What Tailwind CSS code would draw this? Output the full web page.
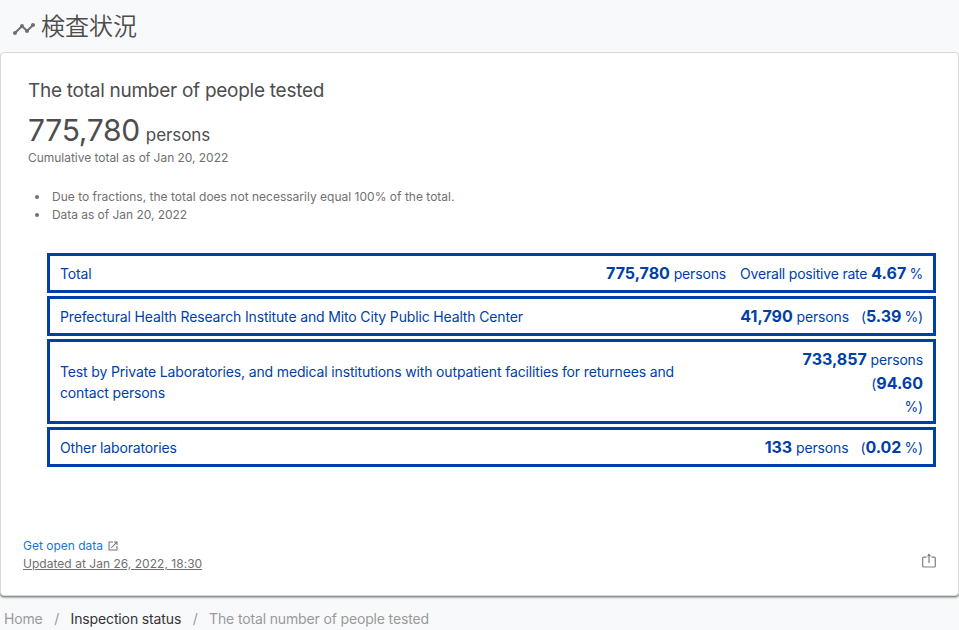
<!DOCTYPE html>
<html lang="en">
<head>
<meta charset="utf-8">
<title>検査状況</title>
<script src="https://cdn.jsdelivr.net/npm/@tailwindcss/browser@4"></script>
</head>
<body class="h-[630px] overflow-hidden bg-[#f8f9fa] font-['Inter','Noto_Sans_CJK_JP',sans-serif] text-[#4d4d4d]">
<header class="flex h-[52px] items-center pl-3">
  <svg class="mt-1.5 size-6 shrink-0" viewBox="0 0 24 24" fill="#707070"><path d="M23 8c0 1.1-.9 2-2 2-.18 0-.35-.02-.51-.07l-3.56 3.55c.05.16.07.34.07.52 0 1.1-.9 2-2 2s-2-.9-2-2c0-.18.02-.36.07-.52l-2.55-2.55c-.16.05-.34.07-.52.07s-.36-.02-.52-.07l-4.55 4.56c.05.16.07.33.07.51 0 1.1-.9 2-2 2s-2-.9-2-2 .9-2 2-2c.18 0 .35.02.51.07l4.56-4.55C8.02 9.36 8 9.18 8 9c0-1.1.9-2 2-2s2 .9 2 2c0 .18-.02.36-.07.52l2.55 2.55c.16-.05.34-.07.52-.07s.36.02.52.07l3.55-3.56C19.02 8.35 19 8.18 19 8c0-1.1.9-2 2-2s2 .9 2 2z"/></svg>
  <h2 lang="ja" class="mb-0.5 ml-[5px] font-['Noto_Sans_CJK_JP',sans-serif] text-2xl font-[350]">検査状況</h2>
</header>
<main class="flex h-[544px] flex-col rounded border border-[#d9d9d9] bg-white px-[22px] pt-[23px] pb-[22px] shadow-[0_2px_2px_rgba(0,0,0,0.28),0_1px_1px_rgba(0,0,0,0.25)]">
  <div class="px-[5px]">
    <h3 class="text-[19px] leading-[30px] tracking-[-0.27px]">The total number of people tested</h3>
    <p class="mt-1 flex h-[39px] items-baseline gap-[6px]"><span class="text-[30px] leading-[40px] tracking-[-0.3px]">775,780</span><span class="text-[17px] tracking-[-0.1px]">persons</span></p>
    <p class="text-xs leading-[18px] tracking-[-0.03px] text-[#707070]">Cumulative total as of Jan 20, 2022</p>
  </div>
  <ul class="mt-[21px] list-disc pl-[27px] text-xs leading-[18px] tracking-[0.01px] text-[#707070]">
    <li class="pl-0.5">Due to fractions, the total does not necessarily equal 100% of the total.</li>
    <li class="pl-0.5 tracking-[-0.04px]">Data as of Jan 20, 2022</li>
  </ul>
  <ul class="mt-[29px] ml-6 flex w-[889px] flex-col gap-[3px] text-sm leading-[21px] tracking-[-0.15px] text-[#003fa7]">
    <li class="flex h-10 items-center justify-between border-3 border-[#003fa7] px-[10px]"><span>Total</span><span><strong class="text-base tracking-normal">775,780</strong> <span>persons</span><span class="ml-[14px] tracking-[-0.2px]">Overall positive rate</span> <strong class="text-base tracking-[0.1px]">4.67</strong><span class="ml-[3px]">%</span></span></li>
    <li class="flex h-10 items-center justify-between border-3 border-[#003fa7] px-[10px]"><span>Prefectural Health Research Institute and Mito City Public Health Center</span><span><strong class="text-base tracking-normal">41,790</strong> persons<span class="ml-3">(</span><strong class="text-base tracking-normal">5.39</strong><span class="ml-[3px]">%)</span></span></li>
    <li class="flex h-[85px] items-center justify-between border-3 border-[#003fa7] px-[10px]"><span>Test by Private Laboratories, and medical institutions with outpatient facilities for returnees and<br>contact persons</span><span class="mt-1 text-right leading-[23.5px]"><strong class="text-base leading-none tracking-normal">733,857</strong> persons<br>(<strong class="text-base leading-none tracking-normal">94.60</strong><br>%)</span></li>
    <li class="flex h-10 items-center justify-between border-3 border-[#003fa7] px-[10px]"><span>Other laboratories</span><span><strong class="text-base tracking-normal">133</strong> persons<span class="ml-3">(</span><strong class="text-base tracking-normal">0.02</strong><span class="ml-[3px]">%)</span></span></li>
  </ul>
  <footer class="mt-auto flex items-end justify-between text-xs leading-[18px]">
    <div>
      <a class="flex items-center text-[#1976d2]"><span>Get open data</span><svg class="ml-1 size-3" viewBox="0 0 24 24" fill="#707070"><path d="M19 19H5V5h7V3H3v18h18v-9h-2v7zM14 3v2h3.6l-9.8 9.8 1.4 1.4L19 6.4V10h2V3h-7z"/></svg></a>
      <p class="tracking-[0.03px] text-[#707070] underline">Updated at Jan 26, 2022, 18:30</p>
    </div>
    <svg class="-mr-px mb-1 size-4" viewBox="0 0 16 16" fill="none" stroke="#808080" stroke-width="1.2"><path d="M5.5 4.2H2.7Q1.7 4.2 1.7 5.2V13Q1.7 14 2.7 14H13.3Q14.3 14 14.3 13V5.2Q14.3 4.2 13.3 4.2H10.5M8 10V1"/><path d="M5.8 3.2L8 .4L10.2 3.2Z" fill="#808080" stroke="none"/></svg>
  </footer>
</main>
<nav class="flex pt-3 pl-1 text-sm leading-[21px] tracking-[-0.15px] text-[#999]"><span>Home</span><span class="px-[11.5px]">/</span><span class="tracking-[-0.13px] text-[#333]">Inspection status</span><span class="px-[11.5px]">/</span><span>The total number of people tested</span></nav>
</body>
</html>
